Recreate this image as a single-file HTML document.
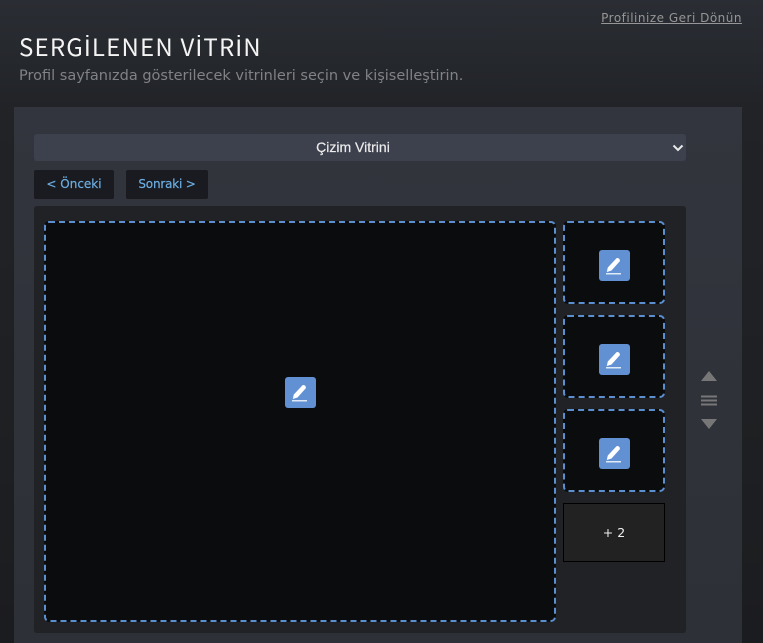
<!DOCTYPE html>
<html><head><meta charset="utf-8">
<style>
html,body{margin:0;padding:0}
body{width:763px;height:643px;overflow:hidden;position:relative;background:linear-gradient(180deg,#2a2d33 0,#25282d 60px,#212327 107px,#1e2023 400px,#1b1c1f 643px);font-family:"DejaVu Sans",sans-serif}
.a{position:absolute}
#back{right:21px;top:10px;font-size:12px;line-height:16px;color:#969696;text-decoration:underline;letter-spacing:.5px;white-space:nowrap}
#t{left:19px;top:29px;font-size:24px;line-height:34px;color:#f4f4f4;font-weight:400;letter-spacing:1.2px;white-space:nowrap;font-family:"Noto Sans CJK JP","DejaVu Sans",sans-serif}
#t span{font-family:"Liberation Sans",sans-serif}
#s{left:19px;top:66px;font-size:14.5px;line-height:20px;color:#808285;white-space:nowrap}
#p{left:14px;top:107px;width:728px;height:536px;background:linear-gradient(180deg,#32353d 0,#2e3037 100%)}
#sel{left:34px;top:134px;width:638px;padding-right:14px;height:27px;background:#3d414d;border-radius:3px;color:#ececec;font:14px/27px "Liberation Sans",sans-serif;text-align:center;-webkit-text-stroke:.2px #ececec}
.btn{top:170px;height:29px;background:#191b20;border-radius:2px;color:#6cade0;font-size:12px;line-height:29px;text-align:center;white-space:nowrap;-webkit-text-stroke:.2px #6cade0}
#box{left:34px;top:206px;width:652px;height:427px;background:#202226;border-radius:3px}
.d{box-sizing:border-box;border:2px dashed #5c8fd0;border-radius:5px;background:#0b0c0e}
.ic{width:31px;height:31px;background:#6291d3;border-radius:3px}
.ic svg{display:block}
#plus{left:563px;top:503px;width:102px;height:59px;box-sizing:border-box;border:1px solid #000;background:#222222;color:#f0f0f0;font-size:12.500px;line-height:57px;text-align:center}
</style></head><body>
<div class="a" id="back">Profilinize Geri Dönün</div>
<div class="a" id="t">SERG<span>İ</span>LENEN V<span>İ</span>TR<span>İ</span>N</div>
<div class="a" id="s">Profil sayfanızda gösterilecek vitrinleri seçin ve kişiselleştirin.</div>
<div class="a" id="p"></div>
<div class="a" id="sel">Çizim Vitrini</div>
<svg class="a" style="left:671px;top:143px" width="14" height="10" viewBox="0 0 14 10"><path d="M2.500 2.500L7 7L11.500 2.500" fill="none" stroke="#e8e8e8" stroke-width="2"/></svg>
<div class="a btn" style="left:34px;width:80px">&lt; Önceki</div>
<div class="a btn" style="left:126px;width:82px;letter-spacing:-.2px">Sonraki &gt;</div>
<div class="a" id="box"></div>
<div class="a d" style="left:44px;top:221px;width:512px;height:401px"></div>
<div class="a d" style="left:563px;top:221px;width:102px;height:83px"></div>
<div class="a d" style="left:563px;top:315px;width:102px;height:83px"></div>
<div class="a d" style="left:563px;top:409px;width:102px;height:83px"></div>
<div class="a ic" style="left:285px;top:377px"><svg width="31" height="31" viewBox="0 0 31 31"><path d="M7.800 22L8.800 17.500L17.500 8.300Q18.800 7.500 20.200 8.800Q21.300 10.200 20.800 11.300L12.500 20.500Z" fill="#fff"/><path d="M7 23.800H22" stroke="#fff" stroke-width="1.200"/></svg></div>
<div class="a ic" style="left:599px;top:250px"><svg width="31" height="31" viewBox="0 0 31 31"><path d="M7.800 22L8.800 17.500L17.500 8.300Q18.800 7.500 20.200 8.800Q21.300 10.200 20.800 11.300L12.500 20.500Z" fill="#fff"/><path d="M7 23.800H22" stroke="#fff" stroke-width="1.200"/></svg></div>
<div class="a ic" style="left:599px;top:344px"><svg width="31" height="31" viewBox="0 0 31 31"><path d="M7.800 22L8.800 17.500L17.500 8.300Q18.800 7.500 20.200 8.800Q21.300 10.200 20.800 11.300L12.500 20.500Z" fill="#fff"/><path d="M7 23.800H22" stroke="#fff" stroke-width="1.200"/></svg></div>
<div class="a ic" style="left:599px;top:438px"><svg width="31" height="31" viewBox="0 0 31 31"><path d="M7.800 22L8.800 17.500L17.500 8.300Q18.800 7.500 20.200 8.800Q21.300 10.200 20.800 11.300L12.500 20.500Z" fill="#fff"/><path d="M7 23.800H22" stroke="#fff" stroke-width="1.200"/></svg></div>
<div class="a" id="plus">+ 2</div>
<svg class="a" style="left:701px;top:371px" width="16" height="59" viewBox="0 0 16 59"><path d="M0 10L8 0L16 10Z" fill="#777"/><path d="M0 25.500H16M0 29.500H16M0 33.500H16" stroke="#777" stroke-width="2"/><path d="M0 48L16 48L8 58Z" fill="#777"/></svg>
</body></html>
